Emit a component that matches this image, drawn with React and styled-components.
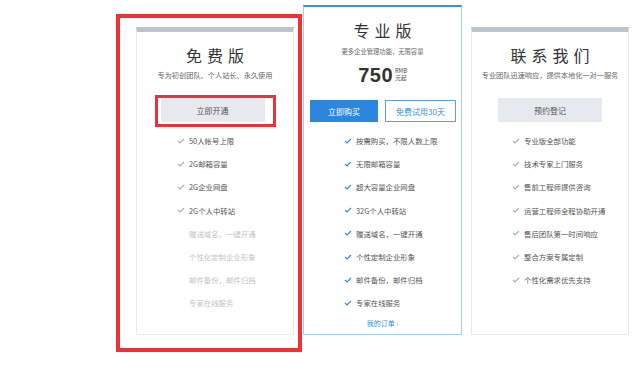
import styled, { createGlobalStyle } from "styled-components";

const GlobalStyle = createGlobalStyle`
  html, body {
    margin: 0;
    background: #fff;
    font-family: "Noto Sans CJK SC", "Noto Sans", sans-serif;
  }
  * { box-sizing: border-box; }
`;

const Row = styled.div`
  display: flex;
  align-items: flex-start;
  padding: 5px 0 0 116px;
`;

const Highlight = styled.div`
  margin-top: 9px;
  border: 4px solid #ea3339;
  padding: 9px 4px 13px 16px;
`;

const Card = styled.div`
  width: ${(p) => (p.$pro ? 159 : 158)}px;
  height: ${(p) => (p.$pro ? 330 : 308)}px;
  margin-top: ${(p) => p.$offset || 0}px;
  margin-left: ${(p) => p.$gap || 0}px;
  border: 1px solid ${(p) => (p.$pro ? "#a9cdee" : "#e8eaee")};
  border-top: ${(p) => (p.$pro ? "2px solid #3a8de0" : "5px solid #b9c4cf")};
  background: #fff;
  display: flex;
  flex-direction: column;
  align-items: center;
`;

const Title = styled.div`
  margin-top: 13px;
  font-size: 16px;
  line-height: 20px;
  letter-spacing: 5px;
  padding-left: 5px;
  color: #333;
`;

const Sub = styled.div`
  margin-top: ${(p) => p.$mt || 4}px;
  font-size: ${(p) => p.$size || 7.2}px;
  line-height: 12px;
  color: #666;
  white-space: nowrap;
`;

const Price = styled.div`
  margin-top: 6px;
  display: flex;
  align-items: center;
  height: 22px;
  color: #333;
`;

const Amount = styled.span`
  font-family: "Liberation Sans", Arial, sans-serif;
  font-weight: bold;
  font-size: 20px;
  letter-spacing: 0.5px;
`;

const Unit = styled.span`
  display: flex;
  flex-direction: column;
  align-items: center;
  margin-left: 2px;
  font-size: 5.6px;
  line-height: 7px;
  color: #444;
`;

const Button = styled.div`
  width: ${(p) => p.$w || 104}px;
  height: ${(p) => p.$h || 24}px;
  display: flex;
  align-items: center;
  justify-content: center;
  font-size: 8px;
  background: ${(p) => (p.$primary ? "#2c87dc" : p.$outline ? "#fff" : "#e6e9ed")};
  color: ${(p) => (p.$primary ? "#fff" : p.$outline ? "#3a8de0" : "#555")};
  border: ${(p) => (p.$outline ? "1px solid #5c9fe3" : "none")};
`;

const SideButton = styled(Button)`
  margin-top: ${(p) => p.$mt || 0}px;
`;

const ButtonMark = styled.div`
  margin: 14px 0 -5px;
  padding: 0 8px 2px 3px;
  border: 3px solid #ea3339;
`;

const ButtonPair = styled.div`
  margin-top: 14px;
  display: flex;
  gap: 7px;
  padding-left: 1px;
`;

const List = styled.ul`
  list-style: none;
  margin: 0;
  padding: 7px 0 0 40px;
  align-self: stretch;
`;

const Item = styled.li`
  height: 23.2px;
  display: flex;
  align-items: center;
  font-size: 7.4px;
  color: ${(p) => (p.$off ? "#bfc3cb" : "#555")};
  white-space: nowrap;
`;

const Check = styled.svg`
  width: 8px;
  height: 6px;
  margin-right: 4px;
  flex: none;
  visibility: ${(p) => (p.$hide ? "hidden" : "visible")};
`;

const Link = styled.div`
  margin-top: 2px;
  font-size: 7px;
  line-height: 12px;
  color: #3a8de0;
`;

function Feature({ text, off, color }) {
  return (
    <Item $off={off}>
      <Check viewBox="0 0 8 6" $hide={off}>
        <polyline
          points="1,3 3,5 7,1"
          fill="none"
          stroke={color}
          strokeWidth="1.1"
        />
      </Check>
      {text}
    </Item>
  );
}

const free = [
  ["50人帐号上限"],
  ["2G邮箱容量"],
  ["2G企业网盘"],
  ["2G个人中转站"],
  ["赠送域名，一键开通", true],
  ["个性化定制企业形象", true],
  ["邮件备份，邮件归档", true],
  ["专家在线服务", true],
];

const pro = [
  "按需购买，不限人数上限",
  "无限邮箱容量",
  "超大容量企业网盘",
  "32G个人中转站",
  "赠送域名，一键开通",
  "个性定制企业形象",
  "邮件备份，邮件归档",
  "专家在线服务",
];

const contact = [
  "专业版全部功能",
  "技术专家上门服务",
  "售前工程师提供咨询",
  "运营工程师全程协助开通",
  "售后团队第一时间响应",
  "整合方案专属定制",
  "个性化需求优先支持",
];

export default function App() {
  return (
    <>
      <GlobalStyle />
      <Row>
        <Highlight>
          <Card>
            <Title>免费版</Title>
            <Sub>专为初创团队、个人站长、永久使用</Sub>
            <ButtonMark>
              <Button>立即开通</Button>
            </ButtonMark>
            <List>
              {free.map(([t, off]) => (
                <Feature key={t} text={t} off={off} color="#aab0b8" />
              ))}
            </List>
          </Card>
        </Highlight>
        <Card $pro $gap={1}>
          <Title>专业版</Title>
          <Sub $mt={6} $size={6.3}>更多企业管理功能，无限容量</Sub>
          <Price>
            <Amount>750</Amount>
            <Unit>
              <span>RMB</span>
              <span>元起</span>
            </Unit>
          </Price>
          <ButtonPair>
            <Button $primary $w={68} $h={22}>立即购买</Button>
            <Button $outline $w={71} $h={22}>免费试用30天</Button>
          </ButtonPair>
          <List>
            {pro.map((t) => (
              <Feature key={t} text={t} color="#3a86d4" />
            ))}
          </List>
          <Link>我的订单 ›</Link>
        </Card>
        <Card $offset={22} $gap={9}>
          <Title>联系我们</Title>
          <Sub>专业团队迅速响应，提供本地化一对一服务</Sub>
          <SideButton $mt={17}>预约登记</SideButton>
          <List>
            {contact.map((t) => (
              <Feature key={t} text={t} color="#aab0b8" />
            ))}
          </List>
        </Card>
      </Row>
    </>
  );
}
